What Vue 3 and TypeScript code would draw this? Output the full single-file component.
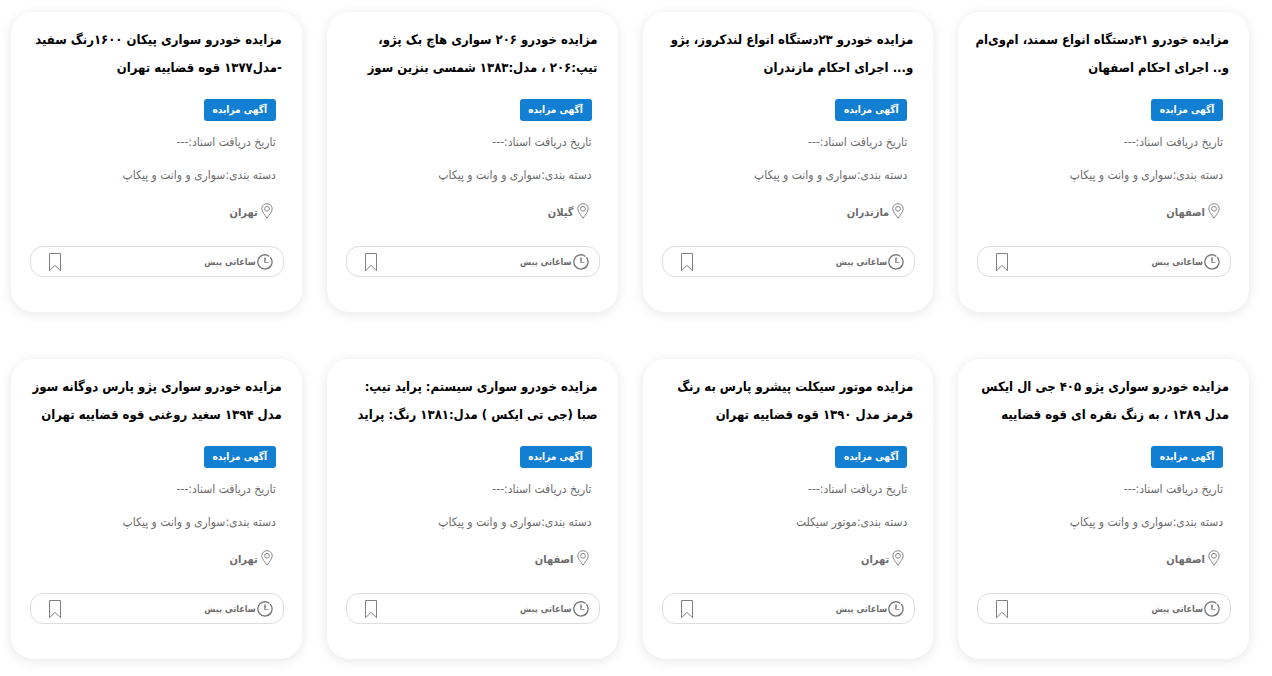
<script setup lang="ts">
interface Auction {
  title: string[]
  category: string
  city: string
}

const vans = 'سواری و وانت و پیکاپ'

const auctions: Auction[] = [
  { title: ['مزایده خودرو ۴۱دستگاه انواع سمند، ام‌وی‌ام', 'و.. اجرای احکام اصفهان'], category: vans, city: 'اصفهان' },
  { title: ['مزایده خودرو ۲۳دستگاه انواع لندکروز، پژو', 'و... اجرای احکام مازندران'], category: vans, city: 'مازندران' },
  { title: ['مزایده خودرو ۲۰۶ سواری هاچ بک پژو،', 'تیپ:۲۰۶ ، مدل:۱۳۸۳ شمسی بنزین سوز'], category: vans, city: 'گیلان' },
  { title: ['مزایده خودرو سواری پیکان ۱۶۰۰رنگ سفید', '-مدل۱۳۷۷ قوه قضاییه تهران'], category: vans, city: 'تهران' },
  { title: ['مزایده خودرو سواری پژو ۴۰۵ جی ال ایکس', 'مدل ۱۳۸۹ ، به زنگ نقره ای قوه قضاییه'], category: vans, city: 'اصفهان' },
  { title: ['مزایده موتور سیکلت پیشرو پارس به رنگ', 'قرمز مدل ۱۳۹۰ قوه قضاییه تهران'], category: 'موتور سیکلت', city: 'تهران' },
  { title: ['مزایده خودرو سواری سیستم: پراید تیپ:', 'صبا (جی تی ایکس ) مدل:۱۳۸۱ رنگ: پراید'], category: vans, city: 'اصفهان' },
  { title: ['مزایده خودرو سواری پژو پارس دوگانه سوز', 'مدل ۱۳۹۴ سغید روغنی قوه قضاییه تهران'], category: vans, city: 'تهران' },
]
</script>

<template>
  <main class="grid" dir="rtl" lang="fa">
    <article v-for="(item, i) in auctions" :key="i" class="card">
      <h2 class="title">
        <a href="#"><span v-for="line in item.title" :key="line" class="line">{{ line }}</span></a>
      </h2>
      <div class="details">
        <span class="badge">آگهی مزایده</span>
        <p class="meta">تاریخ دریافت اسناد:---</p>
        <p class="meta">دسته بندی:{{ item.category }}</p>
        <p class="city">
          <svg class="pin" viewBox="0 0 12 16" aria-hidden="true">
            <path d="M6 .7C3 .7.8 2.9.8 5.8.8 9 4 12 6 15.2 8 12 11.2 9 11.2 5.8 11.2 2.9 9 .7 6 .7Z" />
            <circle cx="6" cy="5.8" r="2.4" />
          </svg>
          <span>{{ item.city }}</span>
        </p>
      </div>
      <footer class="footer">
        <span class="time">
          <svg class="clock" viewBox="0 0 16 16" aria-hidden="true">
            <path d="M12.4 2.4A7.1 7.1 0 1 0 14.1 4.4M13.3 3.2 14.1 4.4" />
            <path class="hands" d="M7.5 3.5V8.5H11.5M8.5 3.5V7.5" />
          </svg>
          <span>ساعاتی پیش</span>
        </span>
        <button class="save" type="button" aria-label="نشان کردن">
          <svg class="bookmark" viewBox="0 0 14 20" aria-hidden="true">
            <path d="M1.5 1.5H12.5V18.8L7 13.3 1.5 18.8Z" />
          </svg>
        </button>
      </footer>
    </article>
  </main>
</template>

<style>
body {
  margin: 0;
  background: #fff;
}
</style>

<style scoped>
.grid {
  display: grid;
  grid-template-columns: repeat(4, minmax(0, 1fr));
  gap: 47px 25px;
  padding: 12px 23px 16px 11px;
  font-family: "DejaVu Sans Condensed", "DejaVu Sans", sans-serif;
}
.card {
  box-sizing: border-box;
  padding: 14px 18px 35px 19px;
  border-radius: 22px;
  background: #fff;
  box-shadow: 0 2px 12px rgba(0, 0, 0, 0.1);
}
.title {
  margin: 0 2px 0 0;
  font-size: 13px;
  font-weight: 700;
  line-height: 28px;
}
.title a {
  color: #000;
  text-decoration: none;
}
.line {
  display: block;
  white-space: nowrap;
}
.details {
  display: flex;
  flex-direction: column;
  align-items: flex-start;
  padding: 17px 8px 0 0;
}
.badge {
  box-sizing: border-box;
  min-width: 72px;
  height: 22px;
  border-radius: 3px;
  background: #127fd2;
  color: #fff;
  font-size: 10px;
  font-weight: 700;
  line-height: 22px;
  text-align: center;
}
.meta {
  margin: 9px 0 0;
  color: #6c6c6c;
  font-size: 12px;
  line-height: 24px;
  white-space: nowrap;
}
.city {
  display: flex;
  align-items: center;
  gap: 3px;
  margin: 14px 0 0;
  padding-right: 3px;
  color: #6c6c6c;
  font-size: 11px;
  font-weight: 700;
  line-height: 24px;
}
.pin {
  width: 12px;
  height: 16px;
  margin-bottom: 4px;
  fill: none;
  stroke: #888;
}
.footer {
  box-sizing: border-box;
  display: flex;
  align-items: center;
  justify-content: space-between;
  height: 31px;
  margin-top: 21px;
  padding: 0 10px 0 17px;
  border: 1px solid #ddd;
  border-radius: 13px;
  color: #6c6c6c;
}
.time {
  display: flex;
  align-items: center;
  gap: 1px;
  font-size: 9px;
  font-weight: 700;
}
.clock {
  width: 16px;
  height: 16px;
  fill: none;
  stroke: #777;
  stroke-width: 1.3;
}
.hands {
  stroke: #999;
  stroke-width: 1;
}
.save {
  display: flex;
  padding: 0;
  border: 0;
  background: none;
  cursor: pointer;
}
.bookmark {
  width: 14px;
  height: 20px;
  fill: none;
  stroke: #808080;
}
</style>
